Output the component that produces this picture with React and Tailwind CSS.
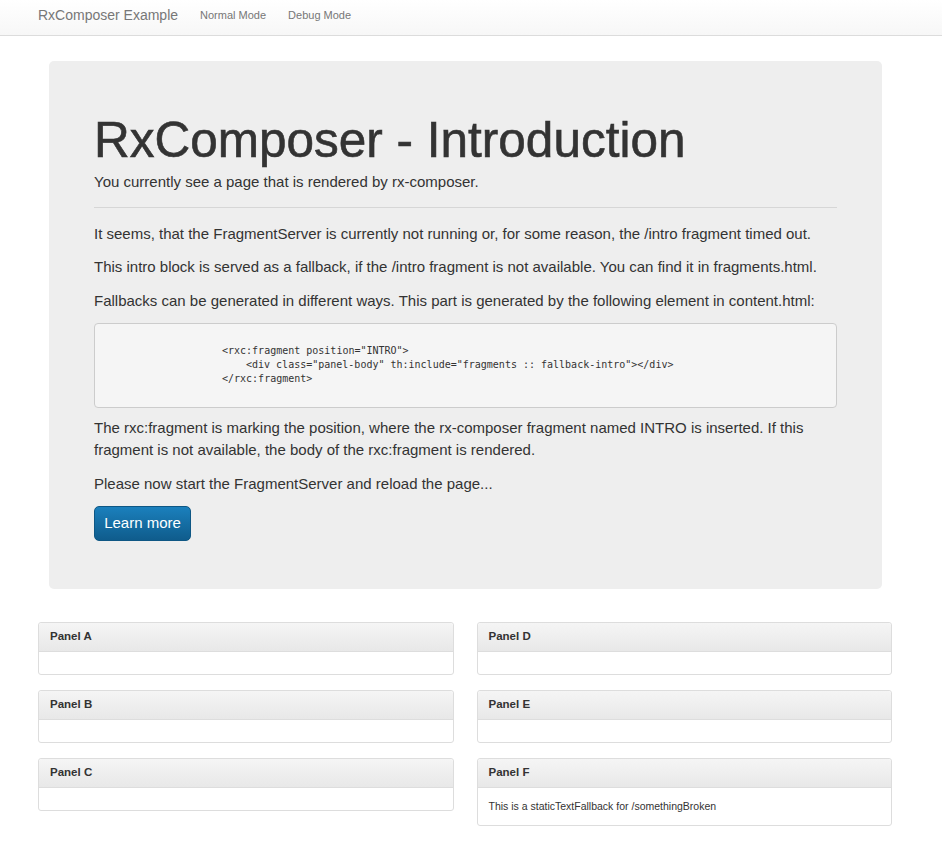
import React from 'react'

const sans = { fontFamily: '"Liberation Sans", Arial, sans-serif' }

const Panel = ({ title, children }) => (
  <div className="mb-[15px] rounded-[3px] border border-[#dddddd] bg-white">
    <div className="flex h-[29px] items-center rounded-t-[3px] border-b border-[#dddddd] bg-gradient-to-b from-[#f5f5f5] to-[#e8e8e8] px-[11px] text-[11.5px] font-bold text-[#333333]">
      {title}
    </div>
    <div className="min-h-[22px] px-[11px] py-[11px] text-[10.5px] leading-[15px] text-[#333333]">
      {children}
    </div>
  </div>
)

export default function App() {
  return (
    <div className="min-h-screen bg-white text-[#333333]" style={sans}>
      {/* Navbar */}
      <nav className="h-[36px] border-b border-[#dcdcdc] bg-gradient-to-b from-white to-[#f7f7f7]">
        <div className="flex h-[31px] w-[930px] items-center px-[38px]">
          <span className="mr-[11px] text-[14px] text-[#777777]">RxComposer Example</span>
          <a className="px-[11px] text-[11px] text-[#777777]">Normal Mode</a>
          <a className="px-[11px] text-[11px] text-[#777777]">Debug Mode</a>
        </div>
      </nav>

      <div className="w-[930px]">
        {/* Jumbotron */}
        <div className="ml-[49px] mr-[48px] mt-[25px] rounded-[5px] bg-[#eeeeee] px-[45px] pb-[48px] pt-[52px]">
          <h1 className="mb-[4px] text-[49.5px] font-medium leading-[53.5px] text-[#333333] [-webkit-text-stroke:0.6px_#333333]">
            RxComposer - Introduction
          </h1>
          <p className="mb-[13.5px] text-[15px] leading-[22.5px]">
            You currently see a page that is rendered by rx-composer.
          </p>
          <hr className="mb-[15px] border-t border-[#d6d6d6]" />
          <p className="mb-[11px] text-[15px] leading-[22.5px]">
            It seems, that the FragmentServer is currently not running or, for some reason, the /intro fragment timed out.
          </p>
          <p className="mb-[11px] text-[15px] leading-[22.5px]">
            This intro block is served as a fallback, if the /intro fragment is not available. You can find it in fragments.html.
          </p>
          <p className="mb-[11px] text-[15px] leading-[22.5px]">
            Fallbacks can be generated in different ways. This part is generated by the following element in content.html:
          </p>
          <pre
            className="mb-[8.5px] rounded-[4px] border border-[#cccccc] bg-[#f5f5f5] pb-[21px] pl-[127px] pt-[20px] text-[10px] leading-[14px] text-[#333333]"
            style={{ fontFamily: '"DejaVu Sans Mono", "Liberation Mono", monospace' }}
          >
            <div>{'<rxc:fragment position="INTRO">'}</div>
            <div className="pl-[24px]">{'<div class="panel-body" th:include="fragments :: fallback-intro"></div>'}</div>
            <div>{'</rxc:fragment>'}</div>
          </pre>
          <p className="mb-[11px] text-[15px] leading-[22.5px]">
            The rxc:fragment is marking the position, where the rx-composer fragment named INTRO is inserted. If this fragment is not available, the body of the rxc:fragment is rendered.
          </p>
          <p className="mb-[11px] text-[15px] leading-[22.5px]">
            Please now start the FragmentServer and reload the page...
          </p>
          <button className="h-[35px] w-[97px] rounded-[5px] border border-[#0e5784] bg-gradient-to-b from-[#1b80bd] to-[#0f5c8c] text-[15px] text-white">
            Learn more
          </button>
        </div>

        {/* Panels */}
        <div className="mt-[33px] grid grid-cols-2 gap-x-[23px] px-[38px]">
          <div>
            <Panel title="Panel A" />
            <Panel title="Panel B" />
            <Panel title="Panel C" />
          </div>
          <div>
            <Panel title="Panel D" />
            <Panel title="Panel E" />
            <Panel title="Panel F">This is a staticTextFallback for /somethingBroken</Panel>
          </div>
        </div>
      </div>
    </div>
  )
}
